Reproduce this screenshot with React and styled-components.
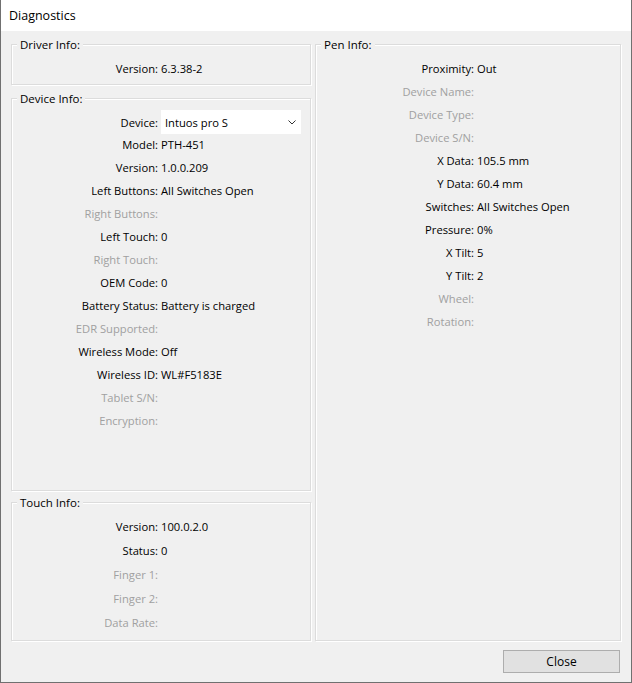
import React from "react";
import styled, { createGlobalStyle } from "styled-components";

const GlobalStyle = createGlobalStyle`
  html, body {
    margin: 0;
    padding: 0;
    background: #ffffff;
  }
  body {
    font-family: "Open Sans", "Noto Sans", sans-serif;
    font-size: 11.2px;
    color: #000;
  }
`;

const Window = styled.div`
  width: 632px;
  height: 683px;
  box-sizing: border-box;
  border: 1px solid #707070;
  border-top: none;
  background: #f0f0f0;
  display: flex;
  flex-direction: column;
`;

const TitleBar = styled.div`
  height: 31px;
  flex: none;
  background: #ffffff;
  padding-left: 8px;
  display: flex;
  align-items: center;
  font-size: 12.5px;
  color: #000;
`;

const Content = styled.div`
  flex: 1;
  display: flex;
  flex-direction: column;
  padding: 13px 10px 9px 10px;
`;

const Columns = styled.div`
  display: grid;
  grid-template-columns: 300px 306px;
  column-gap: 4px;
  height: 597px;
`;

const Stack = styled.div`
  display: flex;
  flex-direction: column;
`;

const GroupBox = styled.div`
  position: relative;
  box-sizing: border-box;
  height: ${(p) => p.$height}px;
  margin-top: ${(p) => p.$mt || 0}px;
  border: 1px solid #dcdcdc;
  box-shadow: inset 1px 1px 0 #ffffff, 1px 1px 0 #ffffff;
  padding-top: ${(p) => p.$pt}px;
`;

const Legend = styled.span`
  position: absolute;
  top: -8px;
  left: 5px;
  padding: 0 3px;
  line-height: 15px;
  background: #f0f0f0;
  font-size: 11.5px;
  color: #000;
`;

const Row = styled.div`
  display: grid;
  grid-template-columns: ${(p) => p.$labelWidth}px 1fr;
  column-gap: 3px;
  height: ${(p) => p.$h}px;
  align-items: center;
  white-space: nowrap;
`;

const Label = styled.span`
  text-align: right;
  color: ${(p) => (p.$disabled ? "#a0a0a0" : "#000")};
`;

const Value = styled.span`
  color: #000;
`;

const Select = styled.div`
  width: 140px;
  height: 24px;
  box-sizing: border-box;
  background: #ffffff;
  display: flex;
  align-items: center;
  justify-content: space-between;
  padding: 0 5px 0 4px;
`;

const Footer = styled.div`
  display: flex;
  justify-content: flex-end;
  margin-top: 9px;
  padding-right: 1px;
`;

const Button = styled.button`
  width: 117px;
  height: 23px;
  box-sizing: border-box;
  border: 1px solid #adadad;
  background: #e1e1e1;
  font-family: inherit;
  font-size: 12px;
  color: #000;
  padding: 0;
`;

const Chevron = () => (
  <svg width="8" height="5" viewBox="0 0 8 5">
    <path d="M0.5 0.5 L4 4 L7.5 0.5" fill="none" stroke="#333" strokeWidth="1" />
  </svg>
);

const deviceRows = [
  ["Device", "select"],
  ["Model", "PTH-451"],
  ["Version", "1.0.0.209"],
  ["Left Buttons", "All Switches Open"],
  ["Right Buttons", ""],
  ["Left Touch", "0"],
  ["Right Touch", ""],
  ["OEM Code", "0"],
  ["Battery Status", "Battery is charged"],
  ["EDR Supported", ""],
  ["Wireless Mode", "Off"],
  ["Wireless ID", "WL#F5183E"],
  ["Tablet S/N", ""],
  ["Encryption", ""],
];

const touchRows = [
  ["Version", "100.0.2.0"],
  ["Status", "0"],
  ["Finger 1", ""],
  ["Finger 2", ""],
  ["Data Rate", ""],
];

const penRows = [
  ["Proximity", "Out"],
  ["Device Name", ""],
  ["Device Type", ""],
  ["Device S/N", ""],
  ["X Data", "105.5 mm"],
  ["Y Data", "60.4 mm"],
  ["Switches", "All Switches Open"],
  ["Pressure", "0%"],
  ["X Tilt", "5"],
  ["Y Tilt", "2"],
  ["Wheel", ""],
  ["Rotation", ""],
];

const InfoRows = ({ rows, labelWidth, h }) =>
  rows.map(([label, value]) => (
    <Row key={label} $labelWidth={labelWidth} $h={h}>
      <Label $disabled={!value}>{label}:</Label>
      {value === "select" ? (
        <Select>
          <span>Intuos pro S</span>
          <Chevron />
        </Select>
      ) : (
        <Value>{value}</Value>
      )}
    </Row>
  ));

export default function App() {
  return (
    <>
      <GlobalStyle />
      <Window>
        <TitleBar>Diagnostics</TitleBar>
        <Content>
          <Columns>
            <Stack>
              <GroupBox $height={41} $pt={12}>
                <Legend>Driver Info:</Legend>
                <InfoRows rows={[["Version", "6.3.38-2"]]} labelWidth={146} h={23} />
              </GroupBox>
              <GroupBox $height={393} $mt={13} $pt={11}>
                <Legend>Device Info:</Legend>
                <InfoRows rows={deviceRows} labelWidth={146} h={23} />
              </GroupBox>
              <GroupBox $height={139} $mt={11} $pt={11}>
                <Legend>Touch Info:</Legend>
                <InfoRows rows={touchRows} labelWidth={146} h={24} />
              </GroupBox>
            </Stack>
            <GroupBox $height={597} $pt={12}>
              <Legend>Pen Info:</Legend>
              <InfoRows rows={penRows} labelWidth={158} h={23} />
            </GroupBox>
          </Columns>
          <Footer>
            <Button>Close</Button>
          </Footer>
        </Content>
      </Window>
    </>
  );
}
